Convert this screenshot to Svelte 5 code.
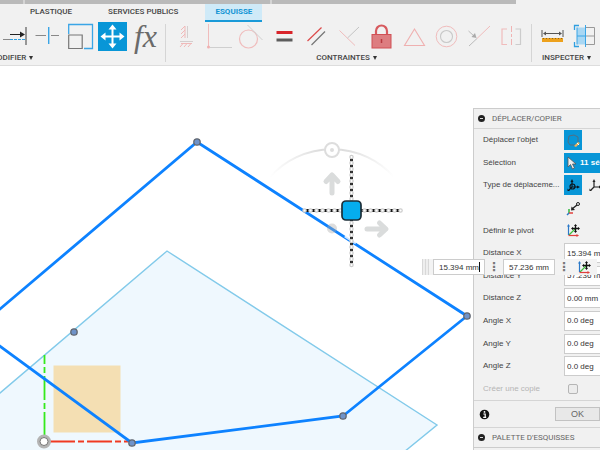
<script lang="ts">
  const tabs = ["PLASTIQUE", "SERVICES PUBLICS", "ESQUISSE"];
  let activeTab = $state("ESQUISSE");

  let fields = $state([
    { id: "dx", label: "Distance X", value: "15.394 mm" },
    { id: "dy", label: "Distance Y", value: "57.236 mm" },
    { id: "dz", label: "Distance Z", value: "0.00 mm" },
    { id: "ax", label: "Angle X", value: "0.0 deg" },
    { id: "ay", label: "Angle Y", value: "0.0 deg" },
    { id: "az", label: "Angle Z", value: "0.0 deg" }
  ]);
  let copy = $state(false);

  const points = [[197, 142], [467, 316], [343, 416], [132, 443], [74, 332]];
</script>

{#snippet pivotIcon()}
  <svg width="15" height="15" viewBox="0 0 15 15" fill="none">
    <path d="M3 12L9 6" stroke="#3fc13f" stroke-width="1.2" />
    <path d="M2.5 12V3" stroke="#2a78c8" stroke-width="1.2" />
    <path d="M1 3.5L2.5 1L4 3.5Z" fill="#2a78c8" />
    <path d="M2.5 12.5H11" stroke="#e0403c" stroke-width="1.2" />
    <path d="M10.5 11L13 12.5L10.5 14Z" fill="#e0403c" />
    <path d="M9.5 2V9M6 5.5H13" stroke="#111" stroke-width="1.3" />
    <path d="M8 3L9.5 1L11 3ZM8 8L9.5 10L11 8ZM7 4L5 5.5L7 7ZM12 4L14 5.5L12 7Z" fill="#111" />
  </svg>
{/snippet}

<div class="app">
  <header class="ribbon">
    <div class="titlebar"><i></i><i></i></div>

    <nav class="tabs">
      {#each tabs as tab}
        <button class="tab" class:active={tab === activeTab} onclick={() => (activeTab = tab)}>{tab}</button>
      {/each}
    </nav>

    <div class="tools">
      <section class="group modify">
        <div class="icons">
          <button aria-label="Prolonger">
            <svg viewBox="0 0 29 29">
              <path d="M3 17.5H10" stroke="#888" /><path d="M10 17.5H26" stroke="#2f9fe0" stroke-dasharray="3 1" />
              <path d="M10 12.5H21" stroke="#222" /><path d="M20 9.5L25 12.5L20 15.5Z" fill="#222" />
              <path d="M26 5V23" stroke="#777" stroke-width="1.5" />
            </svg>
          </button>
          <button aria-label="Ajuster">
            <svg viewBox="0 0 29 29">
              <path d="M2.5 13.5H13M18 13.5H26" stroke="#888" /><path d="M15.7 5V22" stroke="#3aa5e6" stroke-width="1.4" />
            </svg>
          </button>
          <button aria-label="Échelle">
            <svg viewBox="0 0 29 29">
              <path d="M2.7 12V2.5H26.5V26.5H18" stroke="#3aa5e6" stroke-width="1.3" />
              <path d="M2.7 13H16.2V26.5H2.7Z" stroke="#777" stroke-width="1.2" />
            </svg>
          </button>
          <button class="on" aria-label="Déplacer">
            <svg viewBox="0 0 29 29">
              <path d="M14.5 5V24M5 14.5H24" stroke="#fff" stroke-width="2" />
              <path d="M10.5 7.5L14.5 2.5L18.5 7.5ZM10.5 21.5L14.5 26.5L18.5 21.5ZM7.5 10.5L2.5 14.5L7.5 18.5ZM21.5 10.5L26.5 14.5L21.5 18.5Z" fill="#fff" />
            </svg>
          </button>
          <button class="fx" aria-label="Modifier les paramètres"><i>fx</i></button>
        </div>
        <button class="caption">MODIFIER <b></b></button>
      </section>

      <span class="rule"></span>

      <section class="group constraints">
        <div class="icons">
          <button aria-label="Horizontal/Vertical">
            <svg viewBox="0 0 29 29">
              <path d="M15.5 4V16M8 19.5H21" stroke="#d4cfcf" />
              <path d="M9 8L13 4M9 12L13 8M9 16L13 12M8 25L11 21.5M12 25L15 21.5M16 25L19 21.5M9 21.5H20M13 4V16" stroke="#f0b9b9" />
            </svg>
          </button>
          <button aria-label="Coïncident">
            <svg viewBox="0 0 29 29">
              <path d="M3.5 2V24" stroke="#f0bcbc" /><path d="M5 25.5H27" stroke="#cfcfcf" /><circle cx="3.5" cy="25" r="1.5" fill="#efb0b0" />
            </svg>
          </button>
          <button aria-label="Tangent">
            <svg viewBox="0 0 29 29">
              <circle cx="11.5" cy="17" r="9" stroke="#f0bcbc" stroke-width="1.2" /><path d="M10.5 3L25.5 18" stroke="#cfcfcf" />
            </svg>
          </button>
          <button aria-label="Égal">
            <svg viewBox="0 0 29 29">
              <path d="M6.5 10.5H22.5" stroke="#d8242a" stroke-width="3" /><path d="M6.5 18H22.5" stroke="#5c5c5c" stroke-width="3" />
            </svg>
          </button>
          <button aria-label="Parallèle">
            <svg viewBox="0 0 29 29">
              <path d="M5.5 19L19.5 5.5" stroke="#dc4a4a" stroke-width="1.2" /><path d="M9.5 23L23 9.5" stroke="#777" stroke-width="1.2" />
            </svg>
          </button>
          <button aria-label="Perpendiculaire">
            <svg viewBox="0 0 29 29">
              <path d="M4.5 8.5L20 23.5" stroke="#f0bcbc" /><path d="M12.5 16L24 5" stroke="#c4c4c4" />
            </svg>
          </button>
          <button aria-label="Fixer">
            <svg viewBox="0 0 29 29">
              <path d="M9 13V9A5.5 5.5 0 0 1 20 9V13" stroke="#d75a5e" stroke-width="2.2" />
              <rect x="5" y="12.5" width="19" height="13.5" fill="#dd7d80" stroke="#d05055" /><path d="M14.5 17V21" stroke="#b83a40" stroke-width="1.5" />
            </svg>
          </button>
          <button aria-label="Milieu">
            <svg viewBox="0 0 29 29"><path d="M14.5 7L4.5 23.5H24.5Z" stroke="#efb0b0" stroke-width="1.1" /></svg>
          </button>
          <button aria-label="Concentrique">
            <svg viewBox="0 0 29 29"><circle cx="14.5" cy="14.5" r="10.3" stroke="#f0bcbc" /><circle cx="14.5" cy="14.5" r="6" stroke="#c8c8c8" stroke-width="1.1" /></svg>
          </button>
          <button aria-label="Colinéaire">
            <svg viewBox="0 0 29 29">
              <path d="M12 16.5L25 4" stroke="#f0bcbc" /><path d="M4 24L12 16.5M3.5 9L9 14" stroke="#bbb" /><path d="M11.5 16L6.5 15L10 11Z" fill="#aaa" />
            </svg>
          </button>
          <button aria-label="Symétrie">
            <svg viewBox="0 0 29 29">
              <path d="M10 7H5V22.5H10" stroke="#f0bcbc" stroke-width="1.2" /><path d="M14.5 4V25" stroke="#f0b3b3" stroke-dasharray="6 2 3 2" />
              <path d="M18.5 7H23.5V22.5H18.5" stroke="#ccc" stroke-width="1.2" />
            </svg>
          </button>
        </div>
        <button class="caption">CONTRAINTES <b></b></button>
      </section>

      <span class="rule"></span>

      <section class="group inspect">
        <div class="icons">
          <button aria-label="Mesurer">
            <svg viewBox="0 0 29 29">
              <path d="M4 8V15M25 8V15M6 11.5H23" stroke="#555" /><path d="M5 11.5L8 9.5V13.5ZM24 11.5L21 9.5V13.5Z" fill="#555" />
              <path d="M4 18H25" stroke="#eda11c" stroke-width="4" /><path d="M5 16.5H25" stroke="#8c6420" stroke-dasharray="1 2" />
            </svg>
          </button>
          <button aria-label="Interférence">
            <svg viewBox="0 0 29 29">
              <path d="M6 5.5H14.5V22.5H6Z" fill="#a9d7f3" /><path d="M14.5 5.5H23.5V22.5H14.5M14.5 14H23.5" stroke="#999" />
              <path d="M14.5 3V25M6 14H14.5M6 5.5V22.5" stroke="#3aa5e6" /><path d="M8 3.5H3.5V8M3.5 20V24.5H8" stroke="#2f9fe0" stroke-width="1.3" />
            </svg>
          </button>
        </div>
        <button class="caption">INSPECTER <b></b></button>
      </section>
    </div>
  </header>

  <main class="viewport">
    <svg class="sketch" viewBox="0 66 600 384" preserveAspectRatio="xMinYMin slice" fill="none">
      <defs>
        <linearGradient id="fade">
          <stop offset="0" stop-color="#ddd" stop-opacity="0" />
          <stop offset="0.4" stop-color="#ddd" />
          <stop offset="0.6" stop-color="#ddd" />
          <stop offset="1" stop-color="#ddd" stop-opacity="0" />
        </linearGradient>
      </defs>

      <path d="M-10 401.5L167 251L437 425L404 452V470H-10Z" fill="#eff8fe" stroke="#82caea" stroke-width="1.4" />
      <rect x="53.5" y="365.5" width="67" height="67" fill="#f4dfb3" />

      <path d="M44.5 436V355" stroke="#35e91c" stroke-width="1.8" stroke-dasharray="24 3 6 3 24 3 6 3" />
      <path d="M50 441.5H128" stroke="#f03a22" stroke-width="1.8" stroke-dasharray="25 3 6 3" />
      <circle cx="44" cy="441.5" r="5.5" fill="#fff" stroke="#b4b4b4" stroke-width="3" />
      <circle cx="44" cy="441.5" r="4" stroke="#777" />

      <path d="M-10 317.5L197 142L467 316L343 416L132 443L-10 339" stroke="#0d82ff" stroke-width="2.8" />
      {#each points as [x, y]}
        <circle cx={x} cy={y} r="3.2" fill="#6f93c9" stroke="#62676f" stroke-width="1.3" />
      {/each}

      <path d="M270 177A83 83 0 0 1 394 177" stroke="url(#fade)" stroke-width="2" />
      <circle cx="332" cy="150" r="7" fill="#fff" stroke="#ddd" stroke-width="2" />
      <circle cx="332" cy="150" r="2" fill="#ddd" />
      <g stroke="#dadcdc" stroke-width="5" stroke-linecap="round" stroke-linejoin="round">
        <path d="M332 193V177M326 181.5L332 175L338 181.5" />
        <path d="M367 229H384M379.500 223L386 229L379.500 235" />
      </g>
      <circle cx="332" cy="228.5" r="5" fill="#aaa" opacity="0.4" />
      <path d="M345 236L356 243" stroke="#fff" stroke-width="3" opacity="0.8" />
      <g stroke="#151515" stroke-width="2.800" stroke-dasharray="3 3">
        <path d="M351.5 158.5V263" /><path d="M306 210.5H400" />
      </g>
      <g stroke="#cdcdcd" stroke-width="4.5" stroke-linecap="round" stroke-dasharray="0.1 5.9">
        <path d="M351.5 157V266" /><path d="M304.5 210.5H402" />
      </g>
      <g stroke="#fff" stroke-width="2" stroke-linecap="round" stroke-dasharray="0.1 5.9">
        <path d="M351.5 157V266" /><path d="M304.5 210.5H402" />
      </g>
      <rect x="342" y="201" width="19" height="19" rx="4" fill="#05adef" stroke="#1c2e38" stroke-width="1.7" />
    </svg>

    <aside class="panel">
      <h2 class="head"><i class="minus"></i>DÉPLACER/COPIER</h2>

      <form class="rows">
        <div class="row">
          <span class="label">Déplacer l'objet</span>
          <button type="button" class="cell on" aria-label="Objets d'esquisse">
            <svg width="15" height="15" viewBox="0 0 15 15" fill="none">
              <path d="M3 3L8 2L12 4V9M9 12H4L2 9L3 3" stroke="#536f82" />
              <path d="M8 13L12 9L14 10L10 14Z" fill="#f0b258" /><path d="M11 10L13 12" stroke="#fff" />
            </svg>
          </button>
        </div>
        <div class="row">
          <span class="label">Sélection</span>
          <button type="button" class="selection">
            <svg width="10" height="14" viewBox="0 0 10 14">
              <path d="M1 1V11L3.5 8.5L5.5 13L7.5 12L5.5 8H9Z" fill="#eee" stroke="#555" stroke-width="0.8" />
            </svg>
            11 sélectionnés
          </button>
        </div>
        <div class="row">
          <span class="label">Type de déplaceme...</span>
          <button type="button" class="cell on" aria-label="Déplacement libre">
            <svg width="15" height="15" viewBox="0 0 15 15" fill="none" stroke="#0c1820" stroke-width="1.2">
              <path d="M6 9V3M6 9H12M6 9L3 12" /><circle cx="6.5" cy="8.5" r="2.5" />
              <path d="M4.5 4L6 1L7.5 4ZM11 7.5L14 9L11 10.5ZM1.5 10.5L4 13H1.5Z" fill="#0c1820" stroke="none" />
            </svg>
          </button>
          <button type="button" class="cell" aria-label="Translation">
            <svg width="15" height="15" viewBox="0 0 15 15" fill="none" stroke="#222" stroke-width="1.2">
              <path d="M6 9V3M6 9H12M6 9L3 12" />
              <path d="M4.5 4L6 1L7.5 4ZM11 7.5L14 9L11 10.5ZM1.5 10.5L4 13H1.5Z" fill="#222" stroke="none" />
            </svg>
          </button>
        </div>
        <div class="row">
          <span class="label"></span>
          <button type="button" class="cell" aria-label="Point à point">
            <svg width="15" height="15" viewBox="0 0 15 15" fill="none">
              <path d="M6 8L11 4" stroke="#222" stroke-width="1.4" /><path d="M5 9.5L5.5 5.5L9 9Z" fill="#222" />
              <circle cx="12" cy="3" r="1.5" stroke="#222" />
              <path d="M3 12V8" stroke="#2fb83c" stroke-width="1.5" /><path d="M3 12H7" stroke="#e0403c" stroke-width="1.5" /><path d="M3 12L1 14" stroke="#2a78c8" stroke-width="1.5" />
            </svg>
          </button>
        </div>
        <div class="row">
          <span class="label">Définir le pivot</span>
          <button type="button" class="cell" aria-label="Définir le pivot">{@render pivotIcon()}</button>
        </div>
        {#each fields as field}
          <div class="row">
            <label class="label" for={field.id}>{field.label}</label>
            <input type="text" id={field.id} bind:value={field.value} />
          </div>
        {/each}
        <div class="row">
          <label class="label off" for="copy">Créer une copie</label>
          <input type="checkbox" id="copy" bind:checked={copy} disabled />
        </div>
      </form>

      <footer class="foot">
        <svg width="11" height="11" viewBox="0 0 11 11">
          <circle cx="5.5" cy="5.5" r="4.8" fill="#111" />
          <path d="M4.3 5H6.2V8.3M4.2 8.3H7.2" fill="none" stroke="#fff" stroke-width="1.2" /><circle cx="5.5" cy="2.9" r="0.9" fill="#fff" />
        </svg>
        <button class="ok">OK</button>
      </footer>

      <h2 class="head last"><i class="minus"></i>PALETTE D'ESQUISSES</h2>
    </aside>

    <div class="hud">
      <span class="grip"></span>
      <input type="text" aria-label="Distance X" bind:value={fields[0].value} />
      <span class="dots">⋮</span>
      <input type="text" aria-label="Distance Y" bind:value={fields[1].value} />
      <span class="dots">⋮</span>
      <button aria-label="Définir le pivot">{@render pivotIcon()}</button>
      <i class="caret"></i>
    </div>
  </main>
</div>

<style>
  :global(body) { margin: 0; }

  .app {
    display: flex;
    flex-direction: column;
    min-height: 100vh;
    overflow: hidden;
    background: #fff;
    color: #444;
    font: 8px/10px "Liberation Sans", Arial, sans-serif;
  }
  button { margin: 0; padding: 0; border: 0; background: none; color: inherit; font: inherit; cursor: pointer; }
  input { box-sizing: border-box; margin: 0; font: inherit; color: #333; }
  svg { display: block; flex: none; }

  /* ribbon */
  .ribbon { background: #f1f1f1; border-bottom: 1px solid #ddd; font-family: Roboto, sans-serif; font-weight: 500; }
  .titlebar { display: flex; width: 86%; height: 4px; background: #bababa; }
  .titlebar i { width: 2px; margin-left: 23px; background: #d4d4d4; }
  .titlebar i + i { margin-left: 245px; }
  .tabs { display: flex; gap: 18px; height: 18px; padding-left: 21px; }
  .tab { box-sizing: border-box; padding: 0 9px; border-bottom: 2px solid transparent; }
  .tab.active { padding: 0 10px; background: #cfeaf8; border-color: #1a9ad8; color: #1494d4; font-weight: 700; }

  .tools { display: flex; height: 43px; }
  .group { display: flex; flex: none; flex-direction: column; gap: 2px; }
  .modify { width: 160px; }
  .constraints { width: 354px; }
  .inspect { width: 62px; }
  .icons { display: flex; justify-content: space-between; height: 29px; }
  .icons button { width: 29px; height: 29px; }
  .icons svg { width: 29px; height: 29px; fill: none; }
  .icons .on { background: #0896d7; }
  .icons .fx { color: #6a6a6a; font: 32px/27px "Liberation Serif", serif; }
  .caption { align-self: center; display: flex; align-items: center; gap: 3px; padding-right: 5px; white-space: nowrap; }
  .modify .caption { align-self: flex-start; margin-left: -10px; }
  .caption b { border: 2px solid transparent; border-top: 4px solid #333; border-bottom: 0; }
  .rule { width: 1px; margin: 2px 6px 3px 5px; background: #d5d5d5; }

  /* canvas */
  .viewport { position: relative; flex: 1; display: flex; justify-content: flex-end; }
  .sketch { position: absolute; inset: 0; width: 100%; height: 100%; }

  .panel {
    position: relative;
    box-sizing: border-box;
    width: 127px;
    margin-top: 42px;
    overflow: hidden;
    background: #f1f1f1;
    border: solid #ccc;
    border-width: 1px 0 0 1px;
  }
  .head {
    display: flex;
    align-items: center;
    gap: 7px;
    height: 19px;
    margin: 0;
    padding-left: 4px;
    color: #666;
    font: 8px/10px Roboto, sans-serif;
    white-space: nowrap;
  }
  .head.last { border-bottom: 1px solid #ccc; }
  .minus { display: flex; align-items: center; width: 7px; height: 7px; border-radius: 50%; background: #222; }
  .minus::before { content: ""; width: 3px; height: 1px; margin: auto; background: #ddd; }

  .rows { display: grid; grid-template-rows: repeat(12, 1fr); height: 271px; border: solid #d5d5d5; border-width: 1px 0; }
  .row { display: flex; align-items: center; padding-left: 9px; white-space: nowrap; }
  .label { flex: none; width: 81px; }
  .off { color: #b5b5b5; }
  .cell { display: grid; place-items: center; flex: none; width: 18px; height: 20px; margin-right: 4px; }
  .cell.on { background: #0896d7; }
  .selection { display: flex; align-items: center; gap: 3px; flex: none; width: 80px; height: 20px; padding-left: 3px; background: #0896d7; color: #fff; font-weight: 700; }
  .row input[type="text"] { flex: none; width: 64px; height: 20px; padding: 0 2px; border: 1px solid #ccc; background: #fff; }
  .row input[type="checkbox"] { appearance: none; width: 10px; height: 10px; margin-left: 4px; border: 1px solid #b5b5b5; border-radius: 2px; background: #ececec; }

  .foot { display: flex; align-items: center; justify-content: space-between; height: 26px; padding-left: 5px; border-bottom: 1px solid #d5d5d5; }
  .ok { box-sizing: border-box; width: 45px; height: 14px; border: 1px solid #c2c2c2; background: #e8e8e8; color: #666; font-size: 9px; }

  /* floating value inputs */
  .hud { position: absolute; top: 193px; right: 3px; display: flex; align-items: center; height: 16px; background: #f3f3f3; }
  .hud input { width: 52px; height: 16px; padding: 0 5px; border: 1px solid #ccc; background: #fff; }
  .grip { width: 7px; height: 16px; margin-right: 4px; background: repeating-linear-gradient(90deg, #d8d8d8 0 1px, #eee 1px 3px); }
  .dots { width: 18px; color: #777; font: 700 12px/16px "DejaVu Sans", sans-serif; text-align: center; }
  .hud button { margin: 0 5px 0 4px; }
  /* text cursor after the first value */
  .caret { position: absolute; left: 57px; top: 3px; width: 1px; height: 10px; background: #111; }
</style>
